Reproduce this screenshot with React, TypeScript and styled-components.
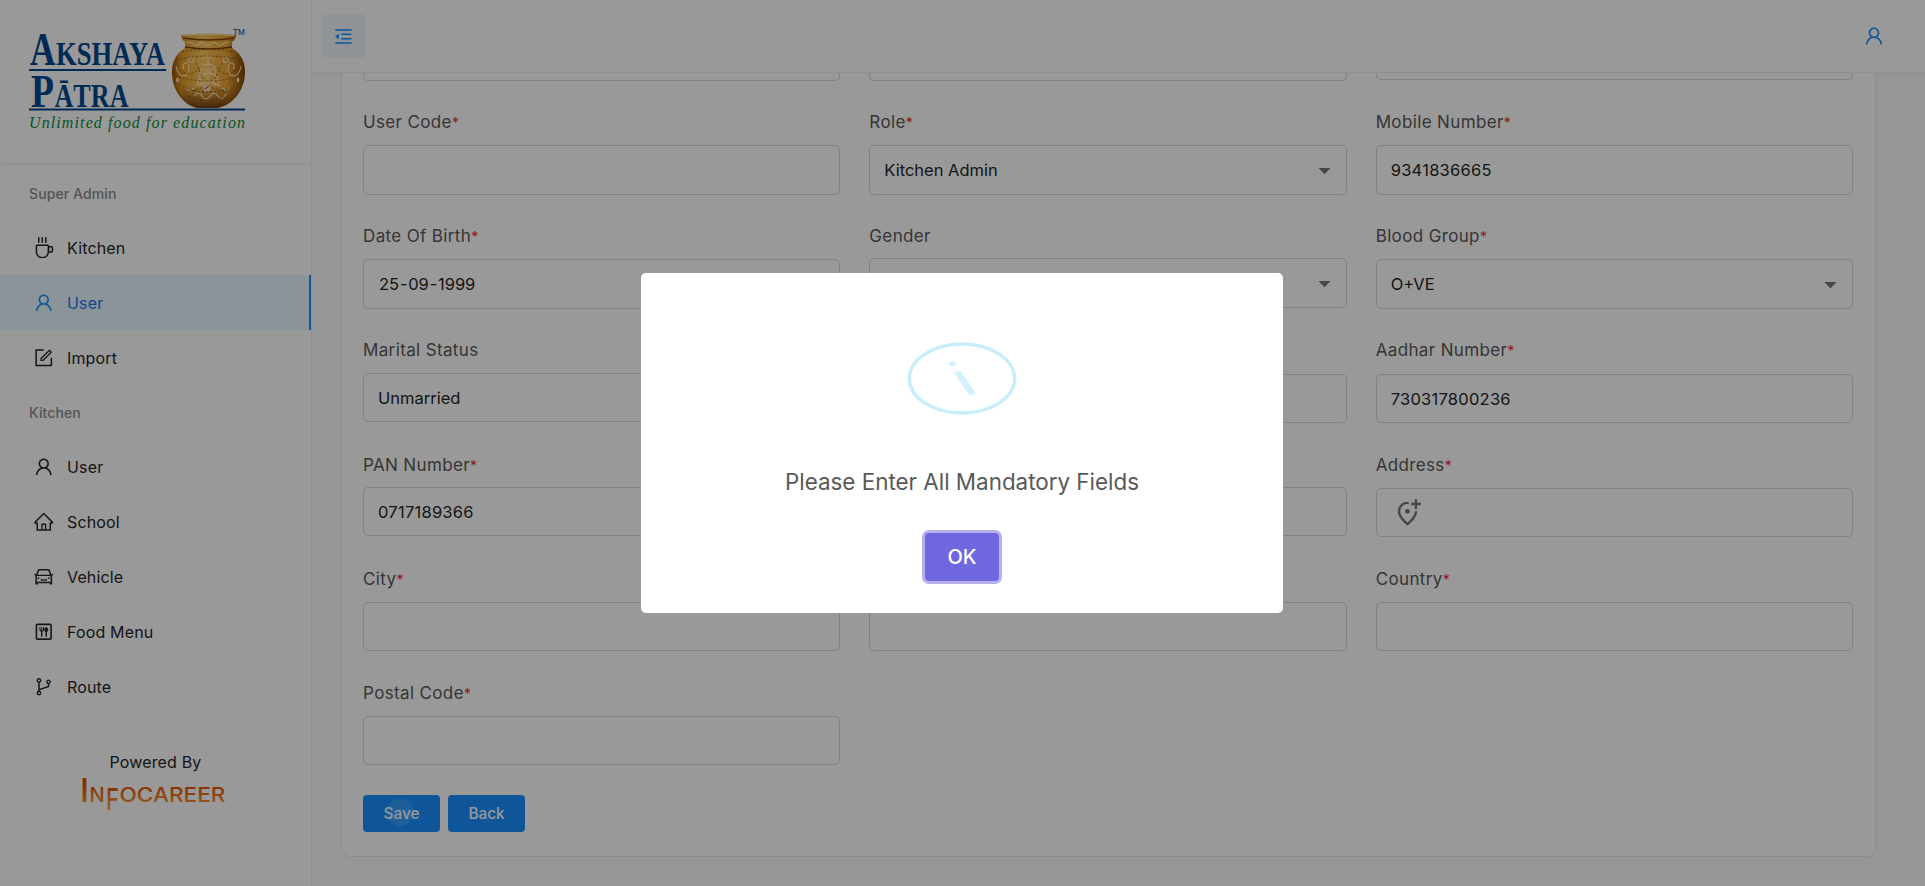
import React from "react";
import styled, { createGlobalStyle, css } from "styled-components";
import {
  AiOutlineBranches,
  AiOutlineCar,
  AiOutlineCoffee,
  AiOutlineForm,
  AiOutlineHome,
  AiOutlineMenuFold,
  AiOutlineUser,
} from "react-icons/ai";
import { MdArrowDropDown, MdOutlineAddLocationAlt } from "react-icons/md";

const GlobalStyle = createGlobalStyle`
  *, *::before, *::after { box-sizing: border-box; }
  html, body { margin: 0; height: 100%; overflow: hidden; }
  body {
    font-family: Inter, "Liberation Sans", sans-serif;
    font-size: 16px;
    color: #262626;
    background: #fafafb;
  }
  #root { height: 100%; }
`;

const Page = styled.div`
  display: flex;
  height: 886px;
`;

const Sidebar = styled.aside`
  flex: none;
  width: 312px;
  background: #fff;
  border-right: 1px solid #f0f0f0;
`;

const LogoArea = styled.div`
  height: 163px;
  padding: 25px 0 0 28px;
  box-shadow: 0 1px 4px rgba(0, 0, 0, 0.1);
  clip-path: inset(0 0 -8px 0);
  svg { overflow: visible; }
`;

const MenuCaption = styled.div<{ $first?: boolean }>`
  height: ${(p) => (p.$first ? 57 : 54)}px;
  padding: ${(p) => (p.$first ? 20 : 17)}px 0 0 29px;
  font-size: 14px;
  line-height: 21px;
  letter-spacing: 0.1px;
  font-weight: 500;
  color: #8c8c8c;
`;

const MenuItem = styled.div<{ $active?: boolean }>`
  display: flex;
  align-items: center;
  height: 55px;
  padding-left: 33px;
  gap: 12.5px;
  font-size: 16px;
  letter-spacing: 0.15px;
  svg { width: 21.5px; height: 21.5px; }
  ${(p) =>
    p.$active &&
    css`
      color: #1d7af3;
      background: #e6f7ff;
      border-right: 2px solid #1890ff;
      svg { color: #1890ff; }
    `}
`;

const Powered = styled.div`
  display: flex;
  flex-direction: column;
  align-items: center;
  padding-top: 38px;
  line-height: 20px;
  letter-spacing: 0.15px;
  svg { overflow: visible; }
`;

const Main = styled.main`
  flex: 1;
  display: flex;
  flex-direction: column;
  min-width: 0;
`;

const Header = styled.header`
  flex: none;
  display: flex;
  align-items: center;
  justify-content: space-between;
  height: 73px;
  padding: 0 40px 0 10px;
  background: #fff;
  border-bottom: 1px solid #f0f0f0;
  color: #1890ff;
`;

const ToggleButton = styled.button`
  display: grid;
  place-items: center;
  width: 43px;
  height: 44px;
  padding: 0;
  border: 0;
  border-radius: 4px;
  background: #f0f7ff;
  color: #1890ff;
`;

const Content = styled.div`
  flex: 1;
  min-height: 0;
  padding: 0 49px 29px 29px;
`;

const Card = styled.section`
  height: 784px;
  padding: 0 22px 0 21px;
  background: #fff;
  border: 1px solid #e6ebf1;
  border-top: 0;
  border-radius: 0 0 9px 9px;
`;

const Grid = styled.div`
  display: grid;
  grid-template-columns: repeat(3, 1fr);
  column-gap: 29px;
`;

const ClippedBox = styled.div<{ $h: number }>`
  height: ${(p) => p.$h}px;
  border: 1px solid #d9d9d9;
  border-top: 0;
  border-radius: 0 0 5px 5px;
`;

const FieldRow = styled(Grid)<{ $h: number }>`
  height: ${(p) => p.$h}px;
`;

const Field = styled.div`
  display: flex;
  flex-direction: column;
`;

const Label = styled.label<{ $h: number }>`
  height: ${(p) => p.$h}px;
  padding-top: 15px;
  font-size: 17px;
  line-height: 23px;
  letter-spacing: 0.36px;
  color: #595959;
  span {
    font-size: 14px;
    letter-spacing: 0;
    color: #f5222d;
  }
`;

const Control = styled.div<{ $h: number }>`
  display: flex;
  align-items: center;
  justify-content: space-between;
  height: ${(p) => p.$h}px;
  padding: 0 7px 0 14px;
  border: 1px solid #d9d9d9;
  border-radius: 5px;
  font-size: 16.5px;
  color: #262626;
  > svg { color: #757575; }
`;

const Value = styled.span<{ $numeric?: boolean }>`
  letter-spacing: ${(p) => (p.$numeric ? 0.25 : 0)}px;
`;

const PinIcon = styled(MdOutlineAddLocationAlt)`
  margin-left: 2px;
`;

const DateText = styled.span`
  display: flex;
  gap: 1px;
  padding-left: 1px;
  letter-spacing: -0.5px;
`;

const Actions = styled.div`
  display: flex;
  gap: 8px;
  margin-top: 1px;
`;

const ActionButton = styled.button`
  position: relative;
  width: 77px;
  height: 37px;
  border: 0;
  border-radius: 4px;
  background: #1890ff;
  color: #fff;
  font: 500 15.3px Inter, sans-serif;
`;

const Ripple = styled.span`
  position: absolute;
  left: 24px;
  top: 4px;
  width: 27px;
  height: 27px;
  border-radius: 50%;
  background: rgba(255, 255, 255, 0.13);
`;

const Overlay = styled.div`
  position: fixed;
  inset: 0;
  display: flex;
  justify-content: center;
  align-items: center;
  background: rgba(0, 0, 0, 0.4);
`;

const Dialog = styled.div`
  display: flex;
  flex-direction: column;
  align-items: center;
  width: 642px;
  height: 340px;
  margin-right: 1px;
  padding-top: 69px;
  border-radius: 5px;
  background: #fff;
`;

const DialogTitle = styled.div`
  margin-top: 52px;
  font-size: 22.4px;
  line-height: 30px;
  color: #595959;
`;

const OkButton = styled.button`
  width: 74px;
  height: 48px;
  margin-top: 36px;
  border: 0;
  border-radius: 4px;
  background: #7066e0;
  box-shadow: 0 0 0 3px rgba(112, 102, 224, 0.5);
  color: #fff;
  font: 500 20px Inter, sans-serif;
`;

const POT =
  "M181 35q27-3 55 0q0 5-4 7v6q13 8 13 24c0 19-13 33-27 36h-21c-13-3-25-17-25-36q0-16 13-24v-6q-4-2-4-7z";

function BrandLogo() {
  return (
    <svg width="220" height="112" viewBox="28 25 220 112">
      <defs>
        <linearGradient id="gold" x1="0" x2="1">
          <stop offset="0" stopColor="#8a4a00" />
          <stop offset=".12" stopColor="#e0982a" />
          <stop offset=".4" stopColor="#fbc65c" />
          <stop offset=".75" stopColor="#eda53a" />
          <stop offset="1" stopColor="#7a4000" />
        </linearGradient>
        <linearGradient id="shade" x1="0" x2="0" y1="0" y2="1">
          <stop offset=".7" stopColor="#6b3000" stopOpacity="0" />
          <stop offset="1" stopColor="#5a2600" stopOpacity=".85" />
        </linearGradient>
      </defs>
      <g fill="#00498f" fontFamily="'Liberation Serif', serif" fontWeight="700">
        <text x="30" y="64.5" fontSize="47" textLength="25.5" lengthAdjust="spacingAndGlyphs">A</text>
        <text x="56" y="64.5" fontSize="33" textLength="109" lengthAdjust="spacingAndGlyphs">KSHAYA</text>
        <text x="31" y="107" fontSize="47" textLength="23" lengthAdjust="spacingAndGlyphs">P</text>
        <text x="54.500" y="107" fontSize="33" textLength="74" lengthAdjust="spacingAndGlyphs">ĀTRA</text>
      </g>
      <text x="233" y="35" fontSize="9.5" fill="#00498f" fontFamily="'Liberation Sans', sans-serif" textLength="12" lengthAdjust="spacingAndGlyphs">TM</text>
      <path d={POT} fill="url(#gold)" />
      <path d={POT} fill="url(#shade)" />
      <path d="M183 35.500q26-2.500 51 0" stroke="#f2e0a0" strokeWidth="1.5" fill="none" />
      <path d="M183 38q26 4 51 0M185 47q24 4 47 0" stroke="#7a4300" strokeWidth="1.500" fill="none" />
      <g fill="none" stroke="#ffe9b4" strokeWidth="1.1">
        <path d="M187 43q4-2 6 1t6 0 6 0 6 0 6 0 6 0 6-1" />
        <path d="M176 66c2 14 14 12 13 2s-9-3-5 1M241 66c-2 14-14 12-13 2s9-3 5 1" />
        <path d="M208 54v30M202 60q6-7 12 0M200 68q8-8 16 0M198 77q10-8 20 0M196 86q12-8 24 0" />
        <path d="M194 96q4-6 8 0t8 0 8 0 8-2M186 88q4 4 8 0M222 88q5 4 8-1" />
        <circle cx="191" cy="60" r="2.500" /><circle cx="226" cy="60" r="2.500" />
        <circle cx="203" cy="72" r="3" /><circle cx="213" cy="72" r="3" />
        <circle cx="201" cy="82" r="3" /><circle cx="216" cy="82" r="3" />
      </g>
      <g fill="none" stroke="#8a4d04" strokeWidth=".9" strokeDasharray="2 2">
        <path d="M182 52q26-5 52 0M176 60q32-8 64 0M175 76q33 10 66 0M179 85q29 14 58 0M188 96q20 9 40 0M180 70q12 9 22-4M236 70q-12 9-20-4M192 91q16-8 34 2M196 63l8 18M222 63l-8 18" />
      </g>
      <ellipse cx="177.500" cy="80" rx="1.300" ry="2.600" fill="#ffeec4" />
      <ellipse cx="238" cy="80" rx="1.300" ry="2.600" fill="#ffeec4" />
      <circle cx="207" cy="88" r="3.6" fill="#f5dcc8" />
      <path d="M205 89l4-3" stroke="#d0443a" strokeWidth="1.2" />
      <path d="M29 70h137M29 109.500h216" stroke="#00498f" strokeWidth="2" />
      <text x="29" y="127.500" fontSize="16" fill="#0a8c3c" fontStyle="italic" fontFamily="'Liberation Serif', serif" textLength="216" lengthAdjust="spacing">Unlimited food for education</text>
    </svg>
  );
}

function InfocareerLogo() {
  return (
    <svg width="150" height="42" viewBox="0 0 150 42">
      <defs>
        <linearGradient id="ember" gradientUnits="userSpaceOnUse" x1="0" x2="0" y1="8" y2="34">
          <stop offset=".2" stopColor="#e04e00" />
          <stop offset="1" stopColor="#f99a35" />
        </linearGradient>
      </defs>
      <text fill="url(#ember)" fontFamily="Inter, sans-serif" fontWeight="500" letterSpacing="0">
        <tspan x="-1" y="30" fontSize="33">I</tspan>
        <tspan x="8.5" fontSize="20">N</tspan>
        <tspan x="25" y="37.5" fontSize="30" textLength="13" lengthAdjust="spacingAndGlyphs">F</tspan>
        <tspan x="38.5" y="30" fontSize="20" textLength="106" lengthAdjust="spacingAndGlyphs">OCAREER</tspan>
      </text>
    </svg>
  );
}

function InfoIcon() {
  return (
    <svg width="110" height="73" viewBox="0 0 110 73">
      <ellipse cx="55" cy="36.500" rx="52.600" ry="34.500" fill="none" stroke="#c9eefb" strokeWidth="3.500" />
      <path d="M41 20.500l6-1.800 3.500 4.300-6 1.800zM47 30.500l6.500-1.800 15.500 22.500-6.500 2.300z" fill="#d5f2fc" />
    </svg>
  );
}

type FieldSpec = {
  label?: string;
  required?: boolean;
  value?: string;
  select?: boolean;
  date?: boolean;
  numeric?: boolean;
  pin?: boolean;
  labelHeight?: number;
};

const rows: { height: number; control: number; fields: FieldSpec[] }[] = [
  {
    height: 114,
    control: 50,
    fields: [
      { label: "User Code", required: true },
      { label: "Role", required: true, value: "Kitchen Admin", select: true },
      { label: "Mobile Number", required: true, value: "9341836665", numeric: true },
    ],
  },
  {
    height: 114,
    control: 50,
    fields: [
      { label: "Date Of Birth", required: true, value: "25-09-1999", date: true },
      { label: "Gender", select: true, labelHeight: 48 },
      { label: "Blood Group", required: true, value: "O+VE", select: true },
    ],
  },
  {
    height: 115,
    control: 49,
    fields: [
      { label: "Marital Status", value: "Unmarried", labelHeight: 49 },
      { labelHeight: 50 },
      { label: "Aadhar Number", required: true, value: "730317800236", numeric: true, labelHeight: 50 },
    ],
  },
  {
    height: 114,
    control: 49,
    fields: [
      { label: "PAN Number", required: true, value: "0717189366", numeric: true, labelHeight: 48 },
      { labelHeight: 48 },
      { label: "Address", required: true, pin: true },
    ],
  },
  {
    height: 114,
    control: 49,
    fields: [{ label: "City", required: true }, {}, { label: "Country", required: true }],
  },
  { height: 127, control: 49, fields: [{ label: "Postal Code", required: true }] },
];

function FieldContent({ field }: { field: FieldSpec }) {
  if (field.pin) return <PinIcon size={29} />;
  if (field.date) {
    const [day, month, year] = (field.value ?? "").split("-");
    return (
      <DateText>
        <Value>{day}</Value>
        <span>-</span>
        <Value>{month}</Value>
        <span>-</span>
        <Value>{year}</Value>
      </DateText>
    );
  }
  return <Value $numeric={field.numeric}>{field.value}</Value>;
}

function FormField({ field, control }: { field: FieldSpec; control: number }) {
  return (
    <Field>
      <Label $h={field.labelHeight ?? 49}>
        {field.label}
        {field.required && <span>*</span>}
      </Label>
      <Control $h={control}>
        <FieldContent field={field} />
        {field.select && <MdArrowDropDown size={29} />}
      </Control>
    </Field>
  );
}

function FoodMenuIcon() {
  return (
    <svg viewBox="-1.200 -1.200 26.400 26.400" fill="none" stroke="currentColor" strokeWidth="2">
      <rect x="3" y="3" width="18" height="18" rx="1" />
      <path d="M9.500 11v7M15 12v6" strokeWidth="1.800" />
      <path d="M7.300 6.500v3.200q0 1.500 2.200 1.500t2.200-1.500V6.500M9.500 6.500v4" strokeWidth="1.300" />
      <ellipse cx="15" cy="9.500" rx="2" ry="2.800" fill="currentColor" strokeWidth=".8" />
    </svg>
  );
}

const adminMenu = [
  { label: "Kitchen", Icon: AiOutlineCoffee },
  { label: "User", Icon: AiOutlineUser, active: true },
  { label: "Import", Icon: AiOutlineForm },
];

const kitchenMenu = [
  { label: "User", Icon: AiOutlineUser },
  { label: "School", Icon: AiOutlineHome },
  { label: "Vehicle", Icon: AiOutlineCar },
  { label: "Food Menu", Icon: FoodMenuIcon },
  { label: "Route", Icon: AiOutlineBranches },
];

export default function App() {
  return (
    <>
      <GlobalStyle />
      <Page>
        <Sidebar>
          <LogoArea>
            <BrandLogo />
          </LogoArea>
          <MenuCaption $first>Super Admin</MenuCaption>
          {adminMenu.map(({ label, Icon, active }) => (
            <MenuItem key={label} $active={active}>
              <Icon />
              {label}
            </MenuItem>
          ))}
          <MenuCaption>Kitchen</MenuCaption>
          {kitchenMenu.map(({ label, Icon }) => (
            <MenuItem key={label}>
              <Icon />
              {label}
            </MenuItem>
          ))}
          <Powered>
            Powered By
            <InfocareerLogo />
          </Powered>
        </Sidebar>
        <Main>
          <Header>
            <ToggleButton>
              <AiOutlineMenuFold size={21} />
            </ToggleButton>
            <AiOutlineUser size={22} />
          </Header>
          <Content>
            <Card>
              <FieldRow $h={23}>
                <ClippedBox $h={8} />
                <ClippedBox $h={8} />
                <ClippedBox $h={7} />
              </FieldRow>
              {rows.map((row, i) => (
                <FieldRow key={i} $h={row.height}>
                  {row.fields.map((field, j) => (
                    <FormField key={j} field={field} control={row.control} />
                  ))}
                </FieldRow>
              ))}
              <Actions>
                <ActionButton>
                  Save
                  <Ripple />
                </ActionButton>
                <ActionButton>Back</ActionButton>
              </Actions>
            </Card>
          </Content>
        </Main>
      </Page>
      <Overlay>
        <Dialog>
          <InfoIcon />
          <DialogTitle>Please Enter All Mandatory Fields</DialogTitle>
          <OkButton>OK</OkButton>
        </Dialog>
      </Overlay>
    </>
  );
}
